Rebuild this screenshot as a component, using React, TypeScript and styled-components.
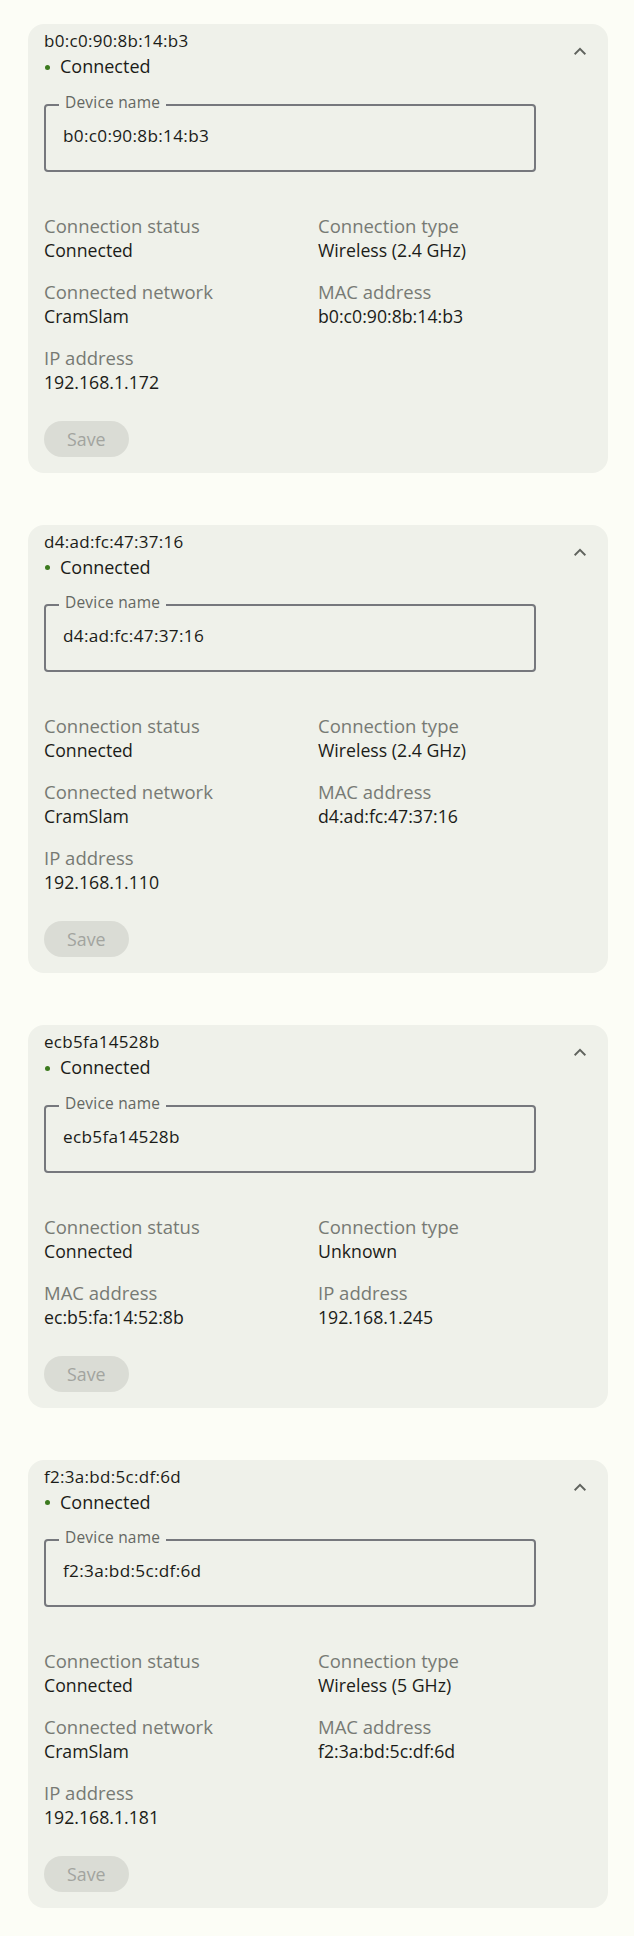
import React from "react";
import styled, { createGlobalStyle } from "styled-components";

const GlobalStyle = createGlobalStyle`
  html, body {
    margin: 0;
    padding: 0;
    background: #fcfdf6;
  }
  body {
    font-family: "Open Sans", "Noto Sans", sans-serif;
    color: #1b1c18;
  }
`;

const Page = styled.main`
  display: flex;
  flex-direction: column;
  gap: 52px;
  padding: 24px 26px 27px 28px;
`;

const Card = styled.section`
  background: #eff1ea;
  border-radius: 16px;
  padding: 5px 16px 16px 16px;
  display: flex;
  flex-direction: column;
`;

const Header = styled.div`
  display: flex;
  align-items: flex-start;
  justify-content: space-between;
  margin-right: -8px;
`;

const HeaderText = styled.div`
  display: flex;
  flex-direction: column;
`;

const Title = styled.div`
  font-size: 17px;
  line-height: 24px;
  letter-spacing: 0.3px;
  color: #1b1c18;
`;

const Status = styled.div`
  display: flex;
  align-items: center;
  gap: 10px;
  font-size: 18px;
  line-height: 26px;
  color: #1b1c18;
`;

const Dot = styled.span`
  width: 5px;
  height: 5px;
  border-radius: 50%;
  background: #3c7a1e;
  margin-left: 1px;
  margin-top: 2px;
`;

const ToggleButton = styled.button`
  width: 40px;
  height: 40px;
  margin-top: 2px;
  border: none;
  background: transparent;
  padding: 0;
  display: flex;
  align-items: center;
  justify-content: center;
  color: #60635e;
  cursor: pointer;
`;

const Field = styled.fieldset`
  box-sizing: border-box;
  width: 492px;
  margin: 13.5px 0 0 0;
  padding: 0 13px 22px 13px;
  border: 2px solid #76787d;
  border-radius: 4px;
`;

const Legend = styled.legend`
  padding: 0 6px 6px 6px;
  font-size: 15.5px;
  line-height: 18px;
  letter-spacing: 0.2px;
  color: #646762;
`;

const NameInput = styled.input`
  display: block;
  box-sizing: border-box;
  width: 100%;
  border: none;
  outline: none;
  background: transparent;
  padding: 0 4px;
  margin-top: 7px;
  height: 24px;
  font-family: inherit;
  font-size: 17.2px;
  line-height: 24px;
  letter-spacing: 0.3px;
  color: #1b1c18;
`;

const Details = styled.dl`
  display: grid;
  grid-template-columns: 1fr 1fr;
  row-gap: 18px;
  margin: 42px 0 0 0;
`;

const Item = styled.div`
  display: flex;
  flex-direction: column;
`;

const Label = styled.dt`
  font-size: 18.5px;
  line-height: 24px;
  color: #777a74;
`;

const Value = styled.dd`
  margin: 0;
  font-size: 17.7px;
  line-height: 24px;
  color: #1b1c18;
`;

const SaveButton = styled.button`
  align-self: flex-start;
  margin-top: 27px;
  height: 36px;
  padding: 0 23px;
  border: none;
  border-radius: 18px;
  background: #dadcd5;
  color: #a2a49f;
  font-family: inherit;
  font-size: 17.8px;
`;

type Device = {
  id: string;
  details: [string, string][];
};

const devices: Device[] = [
  {
    id: "b0:c0:90:8b:14:b3",
    details: [
      ["Connection status", "Connected"],
      ["Connection type", "Wireless (2.4 GHz)"],
      ["Connected network", "CramSlam"],
      ["MAC address", "b0:c0:90:8b:14:b3"],
      ["IP address", "192.168.1.172"],
    ],
  },
  {
    id: "d4:ad:fc:47:37:16",
    details: [
      ["Connection status", "Connected"],
      ["Connection type", "Wireless (2.4 GHz)"],
      ["Connected network", "CramSlam"],
      ["MAC address", "d4:ad:fc:47:37:16"],
      ["IP address", "192.168.1.110"],
    ],
  },
  {
    id: "ecb5fa14528b",
    details: [
      ["Connection status", "Connected"],
      ["Connection type", "Unknown"],
      ["MAC address", "ec:b5:fa:14:52:8b"],
      ["IP address", "192.168.1.245"],
    ],
  },
  {
    id: "f2:3a:bd:5c:df:6d",
    details: [
      ["Connection status", "Connected"],
      ["Connection type", "Wireless (5 GHz)"],
      ["Connected network", "CramSlam"],
      ["MAC address", "f2:3a:bd:5c:df:6d"],
      ["IP address", "192.168.1.181"],
    ],
  },
];

const ChevronUp = () => (
  <svg width="24" height="24" viewBox="0 0 24 24" fill="currentColor" aria-hidden="true">
    <path d="M12 8.6l-6 6 1.3 1.3 4.7-4.7 4.7 4.7 1.3-1.3z" />
  </svg>
);

const DeviceCard = ({ device }: { device: Device }) => (
  <Card>
    <Header>
      <HeaderText>
        <Title>{device.id}</Title>
        <Status>
          <Dot />
          Connected
        </Status>
      </HeaderText>
      <ToggleButton aria-label="Collapse">
        <ChevronUp />
      </ToggleButton>
    </Header>
    <Field>
      <Legend>Device name</Legend>
      <NameInput defaultValue={device.id} />
    </Field>
    <Details>
      {device.details.map(([label, value]) => (
        <Item key={label}>
          <Label>{label}</Label>
          <Value>{value}</Value>
        </Item>
      ))}
    </Details>
    <SaveButton disabled>Save</SaveButton>
  </Card>
);

export default function App() {
  return (
    <>
      <GlobalStyle />
      <Page>
        {devices.map((d) => (
          <DeviceCard key={d.id} device={d} />
        ))}
      </Page>
    </>
  );
}
